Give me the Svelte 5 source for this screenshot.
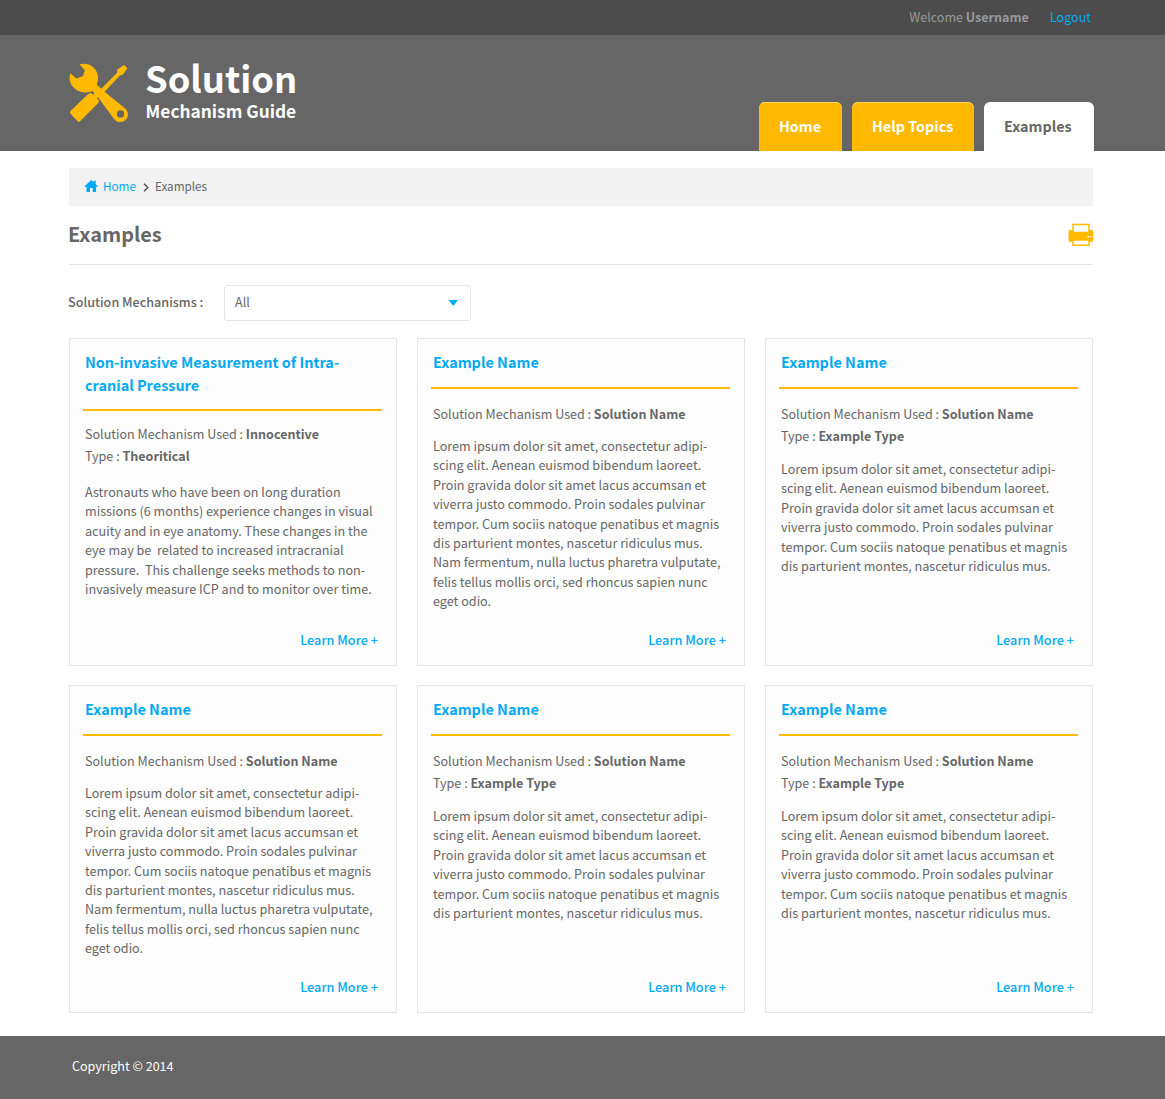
<script>
  const lorem = [
    'Lorem ipsum dolor sit amet, consectetur adipi-',
    'scing elit. Aenean euismod bibendum laoreet.',
    'Proin gravida dolor sit amet lacus accumsan et',
    'viverra justo commodo. Proin sodales pulvinar',
    'tempor. Cum sociis natoque penatibus et magnis',
    'dis parturient montes, nascetur ridiculus mus.'
  ];
  const longLorem = [
    ...lorem,
    'Nam fermentum, nulla luctus pharetra vulputate,',
    'felis tellus mollis orci, sed rhoncus sapien nunc',
    'eget odio.'
  ];
  const name = ['Example Name'];
  const used = ['Solution Mechanism Used', 'Solution Name'];
  const kind = ['Type', 'Example Type'];
  const cards = [
    {
      variant: 'tall',
      title: ['Non-invasive Measurement of Intra-', 'cranial Pressure'],
      meta: [['Solution Mechanism Used', 'Innocentive'], ['Type', 'Theoritical']],
      text: [
        'Astronauts who have been on long duration',
        'missions (6 months) experience changes in visual',
        'acuity and in eye anatomy. These changes in the',
        'eye may be  related to increased intracranial',
        'pressure.  This challenge seeks methods to non-',
        'invasively measure ICP and to monitor over time.'
      ]
    },
    { variant: 'long', title: name, meta: [used], text: longLorem },
    { variant: '', title: name, meta: [used, kind], text: lorem },
    { variant: 'long', title: name, meta: [used], text: longLorem },
    { variant: '', title: name, meta: [used, kind], text: lorem },
    { variant: '', title: name, meta: [used, kind], text: lorem }
  ];
</script>

<div class="page">
  <div class="topbar">
    <span class="welcome">Welcome <b>Username</b></span>
    <a class="logout" href="#logout">Logout</a>
  </div>

  <header>
    <div class="brand">
      <svg class="logo" viewBox="0.5 0 60 60" width="60" height="60" fill="#ffba00">
        <path d="M11 1.300C20-1.500 29.600 5 29.600 14.800C29.600 17.500 29 19.600 28.200 21.500L32.800 25.800L48.600 9.800L48.800 6.600L55.600 2L58.900 5.300L54.300 11.800L51.400 12.600L36 28.700L38 30.300L56.300 45.300C58.500 47.200 59.400 49.300 59.400 51.500C59.400 55.700 56 59 51.900 59C49 59 46.900 57.900 45.200 55.400L31.400 36.700L29.400 34.300L28.400 35.300L30.400 37.300L30 39.800L11.600 58.200Q10.300 59.300 9 58.200L1.900 50.600Q.9 49.200 2 47.900L20 30.700L22.600 30L24.600 31.700L25.900 30.400L24 28.100C12 33 1 24.500 1 15C1 13.200 1.300 11.700 1.900 10.300L7.900 15.400L14.300 13.200L16.300 7.300ZM52 47.200A3.700 3.700 0 1 0 52 54.600A3.700 3.700 0 1 0 52 47.200Z" fill-rule="evenodd" />
      </svg>
      <div class="wordmark">
        <div class="big">Solution</div>
        <div class="small">Mechanism Guide</div>
      </div>
    </div>
    <nav>
      <a class="tab home" href="#home">Home</a>
      <a class="tab help" href="#help">Help Topics</a>
      <a class="tab active" href="#examples">Examples</a>
    </nav>
  </header>

  <main>
    <div class="crumbs">
      <svg width="14" height="12" viewBox="-0.5 0 14 12" fill="#03a9f4">
        <path d="M6.800 0L9.200 2.100V.8H11.200V4L13.400 6.300L12.600 7.200L11.600 6.300V12H8.200V8H5.500V12H2V6.300L.9 7.200L0 6.300Z" />
      </svg>
      <a href="#home">Home</a>
      <svg class="chev" width="6" height="9" viewBox="0 0 6 9" fill="none" stroke="#555" stroke-width="1.500"><path d="M1 .7L4.800 4.500L1 8.300" /></svg>
      <span>Examples</span>
    </div>

    <div class="heading">
      <h1>Examples</h1>
      <svg class="printer" width="26" height="24" viewBox="0 0 26 24">
        <path d="M2 7H24Q25.300 7 25.300 9V17Q25.300 18.700 24 18.700H2Q.5 18.700 .5 17V9Q.5 7 2 7Z" fill="#ffba00" />
        <rect x="5" y="1.500" width="16" height="8" fill="#fff" stroke="#ffba00" stroke-width="1.500" />
        <rect x="5" y="17" width="16" height="5.200" fill="#fff" stroke="#ffba00" stroke-width="1.500" />
        <path d="M19.500 13h1.300v1.500h-1.300zM22 13h1.300v1.500H22z" fill="#fff" />
      </svg>
    </div>

    <div class="filter">
      <span class="label">Solution Mechanisms :</span>
      <div class="select">
        <span>All</span>
        <svg width="10" height="6" viewBox="0 0 10 6" fill="#03a9f4"><path d="M.5 0H10L5.250 6Z" /></svg>
      </div>
    </div>

    <div class="grid">
      {#each cards as card}
        <article class={card.variant}>
          <h2>{#each card.title as line}<span>{line}</span>{/each}</h2>
          <div class="meta">
            {#each card.meta as [key, value]}
              <div>{key} : <b>{value}</b></div>
            {/each}
          </div>
          <div class="text">
            {#each card.text as line}<div>{line}</div>{/each}
          </div>
          <a class="more" href="#more">Learn More +</a>
        </article>
      {/each}
    </div>
  </main>

  <footer>Copyright © 2014</footer>
</div>

<style>
  :global(body) { background: #fff; }
  .page {
    width: 1165px;
    height: 1099px;
    display: flex;
    flex-direction: column;
    overflow: hidden;
    box-sizing: border-box;
    font-family: "Noto Sans CJK SC", "Open Sans", sans-serif;
    font-size: 12.560px;
    color: #666;
  }
  .page :global(*) { box-sizing: border-box; }
  a { text-decoration: none; color: #03a9f4; }
  .topbar {
    height: 35px;
    flex: none;
    background: #4c4c4c;
    display: flex;
    justify-content: flex-end;
    gap: 21px;
    padding-right: 74px;
    line-height: 34px;
    white-space: nowrap;
  }
  .welcome { color: #999; }
  header {
    height: 116px;
    flex: none;
    background: linear-gradient(#666 112px, #606060);
    display: flex;
    justify-content: space-between;
    padding: 0 71px 0 69px;
  }
  .brand { display: flex; gap: 17px; padding-top: 28px; }
  .wordmark { color: #fff; font-weight: 700; white-space: nowrap; }
  .big { font-size: 36.300px; line-height: 38px; margin: -5px 0 0 -1px; }
  .small { font-size: 17.300px; line-height: 22px; margin: 4px 0 0 -.4px; }
  nav { display: flex; align-items: flex-end; gap: 10px; }
  .tab {
    height: 49px;
    border-radius: 6px 6px 0 0;
    background: #ffba00;
    box-shadow: inset 0 1px 0 #ffd457;
    color: #fff;
    font-weight: 700;
    font-size: 14.370px;
    line-height: 47px;
    padding-left: 20px;
    white-space: nowrap;
  }
  .home { width: 83px; }
  .help { width: 122px; }
  .active { width: 110px; background: #fff; box-shadow: none; color: #666; }
  main { flex: 1; padding: 17px 72px 0 69px; }
  .crumbs {
    height: 38px;
    background: #f2f2f2;
    display: flex;
    align-items: center;
    padding: 0 0 2px 15px;
    font-size: 11.700px;
    line-height: 36px;
  }
  .crumbs a { margin-left: 5px; }
  .chev { margin: 2px 6px 0 7px; }
  .heading {
    height: 59px;
    border-bottom: 1px solid #e5e5e5;
    display: flex;
    justify-content: space-between;
    align-items: center;
  }
  h1 { margin: -3px 0 0 -1px; font-size: 19.900px; line-height: 30px; }
  .printer { margin: 0 -1px 0 0; }
  .filter { display: flex; align-items: center; margin-top: 20px; height: 36px; }
  .label { width: 156px; margin-left: -1px; font-size: 12.620px; font-weight: 500; padding-bottom: 3px; white-space: nowrap; }
  .select {
    width: 247px;
    height: 36px;
    border: 1px solid #e5e5e5;
    border-radius: 3px;
    display: flex;
    justify-content: space-between;
    align-items: center;
    padding: 0 12px 0 10px;
  }
  .select span { padding-bottom: 3px; }
  .grid {
    display: grid;
    grid-template-columns: repeat(3, 328px);
    grid-auto-rows: 328px;
    gap: 19px 20px;
    margin-top: 17px;
  }
  article {
    border: 1px solid #e5e5e5;
    background: #fdfdfd;
    padding: 11px 14px 15px 13px;
    display: flex;
    flex-direction: column;
    white-space: pre;
  }
  h2 {
    margin: 0;
    padding: 0 0 14px 2px;
    border-bottom: 2px solid #ffba00;
    font-size: 14.450px;
    line-height: 23px;
    color: #03a9f4;
  }
  h2 span { display: block; }
  .meta { padding: 14px 0 0 2px; line-height: 22px; }
  .text { padding: 12px 0 0 2px; font-size: 12.620px; line-height: 19.400px; }
  .long .text { padding-top: 11px; }
  .tall h2 { padding-bottom: 13px; }
  .tall .meta { padding-top: 12px; }
  .tall .text { padding-top: 15px; }
  .more {
    margin: auto 4px 0 0;
    text-align: right;
    font-size: 12.700px;
    font-weight: 500;
    line-height: 20px;
  }
  footer {
    height: 63px;
    flex: none;
    background: #666;
    color: #fff;
    padding-left: 72px;
    line-height: 60px;
  }
</style>
